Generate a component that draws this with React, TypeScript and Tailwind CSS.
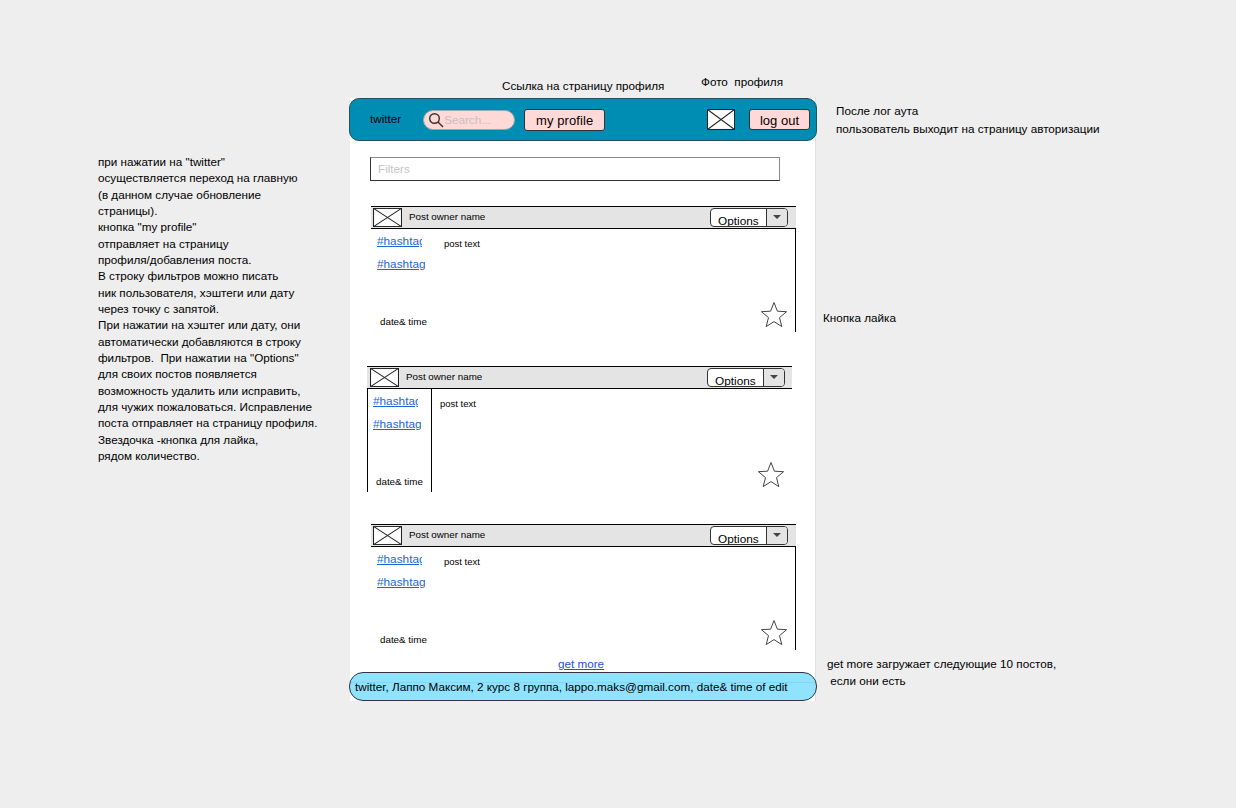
import React from 'react';

const notes = [
  'при нажатии на "twitter"',
  'осуществляется переход на главную',
  '(в данном случае обновление',
  'страницы).',
  'кнопка "my profile"',
  'отправляет на страницу',
  'профиля/добавления поста.',
  'В строку фильтров можно писать',
  'ник пользователя, хэштеги или дату',
  'через точку с запятой.',
  'При нажатии на хэштег или дату, они',
  'автоматически добавляются в строку',
  'фильтров.  При нажатии на "Options"',
  'для своих постов появляется',
  'возможность удалить или исправить,',
  'для чужих пожаловаться. Исправление',
  'поста отправляет на страницу профиля.',
  'Звездочка -кнопка для лайка,',
  'рядом количество.',
];

const Placeholder = ({ className }: { className: string }) => (
  <svg className={className} viewBox="0 0 28 20" preserveAspectRatio="none">
    <rect x="0.5" y="0.5" width="27" height="19" fill="#fff" stroke="#222" />
    <path d="M0.5 0.5L27.5 19.5M27.5 0.5L0.5 19.5" stroke="#222" fill="none" />
  </svg>
);

const Star = () => (
  <svg width="28" height="27" viewBox="0 0 28 27" className="shrink-0">
    <path
      d="M14 1.5L17.4 10.2L26.6 10.7L19.5 16.6L21.8 25.6L14 20.6L6.2 25.6L8.5 16.6L1.4 10.7L10.6 10.2Z"
      fill="none"
      stroke="#444"
      strokeWidth="1"
    />
  </svg>
);

const Post = ({ className, divided }: { className: string; divided?: boolean }) => (
  <div className={`flex h-[126px] flex-col ${className}`}>
    <div className={`flex h-[23px] shrink-0 items-center border-y border-black bg-[#e4e4e4] pr-[8px] ${divided ? 'pl-[3px]' : 'pl-[2px]'}`}>
      <Placeholder className="h-[19px] w-[29px]" />
      <span className="ml-[7px] text-[9.8px] text-black">Post owner name</span>
      <div className={`ml-auto flex h-[19px] w-[78px] overflow-hidden rounded-[4px] border border-[#333] bg-white ${divided ? 'mr-[-1px]' : ''}`}>
        <span className="flex-1 pl-[7px] pt-[4px] text-[11.8px] leading-[17px] text-black">Options</span>
        <span className="flex w-[21px] items-center justify-center border-l border-[#333] bg-[#e4e4e4]">
          <span className="mb-[1px] border-x-[4px] border-t-[4px] border-x-transparent border-t-[#444]" />
        </span>
      </div>
    </div>
    <div className={`flex min-h-0 flex-1 ${divided ? 'border-l border-black' : 'border-r border-black'}`}>
      <div className={`flex flex-col ${divided ? 'w-[64px] border-r border-black pl-[5px]' : 'w-[67px] pl-[6px]'}`}>
        <span className="mt-[5px] w-[45px] overflow-hidden whitespace-nowrap text-[11.8px] leading-[15px] text-[#1a66d8] underline">#hashtag</span>
        <span className="mt-[8px] w-[48px] overflow-hidden whitespace-nowrap text-[11.8px] leading-[15px] text-[#1a66d8] underline">#hashtag1</span>
        <span className="mb-[4px] ml-[3px] mt-auto whitespace-nowrap text-[9.8px] leading-[12px] text-black">date&amp; time</span>
      </div>
      <div className={`flex flex-1 justify-between pb-[4px] pr-[7px] ${divided ? 'pl-[8px]' : 'pl-[6px]'}`}>
        <span className="mt-[9px] text-[9.5px] leading-[12px] text-black">post text</span>
        <div className="mt-auto"><Star /></div>
      </div>
    </div>
  </div>
);

export default function App() {
  return (
    <div className="relative flex h-[808px] w-[1236px] overflow-hidden bg-[#eeeeee] font-['Liberation_Sans',Arial,sans-serif] text-[11.7px] text-black">
      <div className="w-[350px] shrink-0 pl-[98px] pt-[154px] leading-[16.33px]">
        {notes.map((line, i) => (
          <div key={i} className="whitespace-pre">{line}</div>
        ))}
      </div>

      <div className="mt-[98px] flex h-[603px] w-[466px] shrink-0 flex-col border-r border-[#e0e0e0] bg-white">
        <header className="-ml-[1px] flex h-[43px] w-[468px] shrink-0 items-center rounded-[10px] border border-[#25505e] bg-[#008db3]">
          <span className="ml-[20px] mb-[2px]">twitter</span>
          <div className="ml-[22px] flex h-[20px] w-[92px] items-center rounded-full border border-[#9aa] bg-[#ffd9d7] pl-[4px]">
            <svg width="16" height="16" viewBox="0 0 16 16" fill="none" stroke="#333" strokeWidth="1.4">
              <circle cx="6.5" cy="6.5" r="4.8" />
              <path d="M10 10L15 15" />
            </svg>
            <span className="text-[#c8c0c0]">Search...</span>
          </div>
          <button className="ml-[9px] h-[22px] w-[81px] rounded-[3px] border border-[#333] bg-[#ffd9d7] pt-[1px] text-[13px] tracking-[0.1px] text-black">my profile</button>
          <Placeholder className="ml-auto h-[21px] w-[28px]" />
          <button className="ml-[14px] mr-[6px] h-[21px] w-[61px] rounded-[3px] border border-[#333] bg-[#ffd9d7] pt-[1px] text-[13px] text-black">log out</button>
        </header>

        <div className="ml-[20px] mt-[16px] flex h-[24px] w-[410px] shrink-0 items-center border border-b-[#333] border-l-[#333] border-r-[#888] border-t-[#888] pl-[7px] text-[#c4c4c4]">Filters</div>

        <Post className="ml-[21px] mt-[25px] w-[425px] shrink-0" />
        <Post className="ml-[17px] mt-[34px] w-[425px] shrink-0" divided />
        <Post className="ml-[21px] mt-[32px] w-[425px] shrink-0" />

        <a className="mt-[7px] pr-[3px] text-center leading-[14px] text-[#1a50d8] underline">get more</a>

        <footer className="relative -ml-[1px] mt-auto flex h-[29px] w-[468px] shrink-0 items-center rounded-[14px] border border-[#334] bg-[#8fe3ff] pl-[5px]">
          <span className="absolute inset-x-[1px] top-[9px] h-px bg-[#84d6f0]" />
          <span className="relative">twitter, Лаппо Максим, 2 курс 8 группа, lappo.maks@gmail.com, date&amp; time of edit</span>
        </footer>
      </div>

      <span className="absolute left-[502px] top-[77px]">Ссылка на страницу профиля</span>
      <span className="absolute left-[701px] top-[73px] whitespace-pre">Фото  профиля</span>
      <div className="absolute left-[836px] top-[102px] leading-[17.5px]">
        <div>После лог аута</div>
        <div>пользователь выходит на страницу авторизации</div>
      </div>
      <span className="absolute left-[823px] top-[309px]">Кнопка лайка</span>
      <div className="absolute left-[827px] top-[655px] whitespace-pre leading-[17px]">
        <div>get more загружает следующие 10 постов,</div>
        <div> если они есть</div>
      </div>
    </div>
  );
}
